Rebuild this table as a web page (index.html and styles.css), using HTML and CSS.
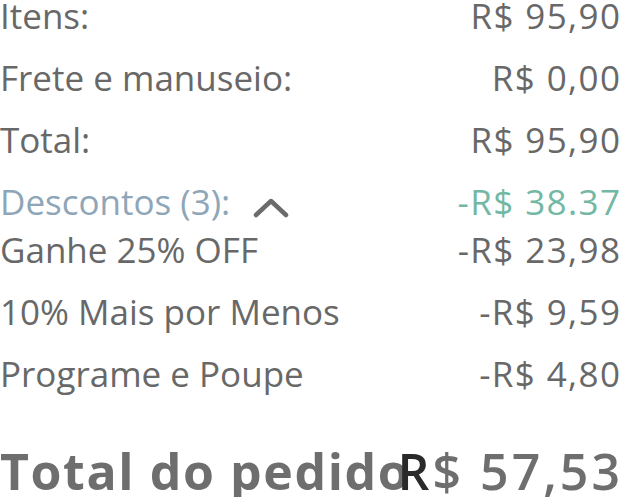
FILE: index.html
```html
<!DOCTYPE html>
<html lang="pt-BR">
<head>
<meta charset="utf-8">
<title>Resumo do pedido</title>
<link rel="stylesheet" href="styles.css">
</head>
<body>
<div class="summary">
  <div class="row"><span>Itens:</span><span class="amt">R$ 95,90</span></div>
  <div class="row"><span>Frete e manuseio:</span><span class="amt">R$ 0,00</span></div>
  <div class="row"><span>Total:</span><span class="amt">R$ 95,90</span></div>
  <div class="row discounts">
    <span class="disc-label">Descontos (3):
      <svg class="chev" width="36" height="22" viewBox="0 0 36 22"><path d="M3 19 L18 5 L33 19" fill="none" stroke="#6b6b6b" stroke-width="4.5" stroke-linecap="round" stroke-linejoin="round"/></svg>
    </span>
    <span class="amt disc-amount">-R$ 38.37</span>
  </div>
  <div class="row sub first"><span>Ganhe 25% OFF</span><span class="amt">-R$ 23,98</span></div>
  <div class="row sub"><span>10% Mais por Menos</span><span class="amt">-R$ 9,59</span></div>
  <div class="row sub"><span>Programe e Poupe</span><span class="amt">-R$ 4,80</span></div>
  <div class="row grand"><span class="grand-label">Total do pedido</span><span class="grand-amount"><span class="dark">R</span>$ 57,53</span></div>
</div>
</body>
</html>
```

FILE: styles.css
```css
html, body {
  margin: 0;
  padding: 0;
  background: #ffffff;
}
.summary {
  width: 620px;
  margin-top: -4px;
  font-family: "Open Sans", "Noto Sans", sans-serif;
  font-size: 35px;
  color: #686868;
  display: flex;
  flex-direction: column;
  gap: 22px;
}
.row {
  display: flex;
  justify-content: space-between;
  align-items: baseline;
  line-height: 40px;
  white-space: nowrap;
}
.amt {
  letter-spacing: 1.4px;
  margin-right: -1.4px;
}
.discounts .disc-label {
  color: #8ea6b8;
  display: flex;
  align-items: center;
  gap: 23px;
}
.chev {
  display: block;
  margin-top: 10px;
}
.disc-amount {
  color: #72b8a4;
}
.row.sub.first {
  margin-top: -14px;
}
.row.grand {
  margin-top: 29px;
  font-size: 50px;
  font-weight: 700;
  line-height: 52px;
  letter-spacing: 1.6px;
  color: #6e6e6e;
  justify-content: flex-start;
}
.grand-label {
  flex: 0 0 auto;
  margin-right: -80px;
}
.grand-amount {
  flex: 0 0 auto;
  margin-left: auto;
  margin-right: -3px;
  font-weight: 600;
  letter-spacing: 3px;
}
.dark {
  color: #2a2a2a;
}
```
